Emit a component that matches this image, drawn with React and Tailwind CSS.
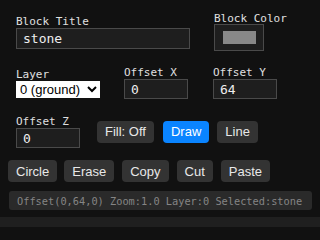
import React from "react";

function Label({ children }) {
  return (
    <div className="text-[11px] leading-[13px] text-[#e0e0e0] font-['DejaVu_Sans_Mono',monospace]">
      {children}
    </div>
  );
}

function Field({ label, value, width }) {
  return (
    <div className="flex flex-col">
      <Label>{label}</Label>
      <input
        readOnly
        value={value}
        className={`${width} h-[20px] border border-[#4a4a4a] bg-[#1e1e1e] px-[6px] text-[13px] leading-[15px] text-[#eeeeee] font-['DejaVu_Sans_Mono',monospace] outline-none`}
      />
    </div>
  );
}

function Btn({ children, active, className = "" }) {
  return (
    <button
      className={`h-[22px] rounded-[4px] px-2 text-[13px] leading-[15px] font-['Liberation_Sans',Arial,sans-serif] ${
        active ? "bg-[#0a84ff] text-white" : "bg-[#333333] text-[#e8e8e8]"
      } ${className}`}
    >
      {children}
    </button>
  );
}

export default function App() {
  return (
    <div className="h-[240px] w-[320px] overflow-hidden bg-[#111111] pt-[12px]">
      {/* Row 1 */}
      <div className="flex items-center pl-4 gap-6">
        <div className="flex flex-col">
          <Label>Block Title</Label>
          <input
            readOnly
            value="stone"
            className="w-[174px] h-[21px] border border-[#4a4a4a] bg-[#1e1e1e] px-[6px] text-[13px] leading-[15px] text-[#eeeeee] font-['DejaVu_Sans_Mono',monospace] outline-none"
          />
        </div>
        <div className="flex flex-col">
          <Label>Block Color</Label>
          <div className="mt-[-1px] h-[27px] w-[50px] border border-[#4a4a4a] bg-[#1e1e1e] pl-[8px] pt-[6px]">
            <div className="h-[13px] w-[33px] bg-[#888888]" />
          </div>
        </div>
      </div>

      {/* Row 2 */}
      <div className="mt-[15px] flex items-center pl-4">
        <div className="flex flex-col">
          <Label>Layer</Label>
          <select
            defaultValue="0"
            className="h-[17px] w-[84px] bg-white text-black text-[13px] font-['Liberation_Sans',Arial,sans-serif]"
          >
            <option value="0">0 (ground)</option>
            <option value="1">1</option>
          </select>
        </div>
        <div className="ml-6">
          <Field label="Offset X" value="0" width="w-[64px]" />
        </div>
        <div className="ml-[25px]">
          <Field label="Offset Y" value="64" width="w-[64px]" />
        </div>
      </div>

      {/* Row 3 */}
      <div className="mt-[16px] flex items-center pl-4">
        <Field label="Offset Z" value="0" width="w-[64px]" />
        <Btn className="ml-[17px]">Fill: Off</Btn>
        <Btn active className="ml-[9px]">Draw</Btn>
        <Btn className="ml-2">Line</Btn>
      </div>

      {/* Row 4 */}
      <div className="mt-[12px] flex items-center pl-2">
        <Btn>Circle</Btn>
        <Btn className="ml-[7px]">Erase</Btn>
        <Btn className="ml-2">Copy</Btn>
        <Btn className="ml-2">Cut</Btn>
        <Btn className="ml-2">Paste</Btn>
      </div>

      {/* Status */}
      <div className="mt-[9px] ml-[9px] mr-[8px] flex h-[19px] items-center rounded-[3px] bg-[#2a2a2a] px-2 text-[10.3px] leading-[12px] text-[#858585] font-['DejaVu_Sans_Mono',monospace] whitespace-nowrap">
        Offset(0,64,0) Zoom:1.0 Layer:0 Selected:stone
      </div>

      {/* Bottom bar */}
      <div className="mt-[7px] h-[10px] w-full bg-[#1f1f1f]" />
    </div>
  );
}
